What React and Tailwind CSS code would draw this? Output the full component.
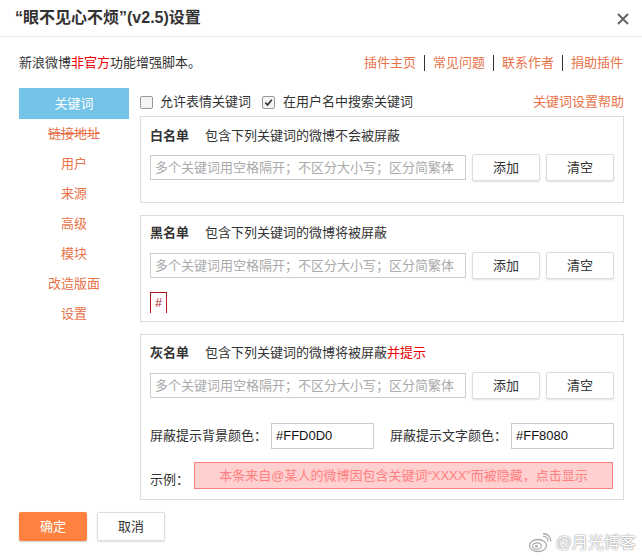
import React from "react";

const FONT = "font-['Liberation_Sans','Noto_Sans_CJK_SC',sans-serif]";

function Checkbox({ checked }) {
  return (
    <span className="w-[13px] h-[13px] border border-[#999] rounded-[2px] bg-[#f4f4f4] flex items-center justify-center">
      {checked && (
        <svg width="9" height="9" viewBox="0 0 10 10">
          <path d="M1.5 5.2 L4 7.8 L8.6 2" fill="none" stroke="#333" strokeWidth="1.8" />
        </svg>
      )}
    </span>
  );
}

function KeywordRow() {
  return (
    <div className="flex items-center h-[27px]">
      <div className="w-[316px] h-[25px] border border-[#ccc] flex items-center pl-[4px] text-[#aaa] whitespace-nowrap overflow-hidden">
        多个关键词用空格隔开；不区分大小写；区分简繁体
      </div>
      <button className="ml-[6px] w-[68px] h-[27px] border border-[#ddd] rounded-[2px] bg-white shadow-[0_1px_2px_rgba(0,0,0,0.12)] text-[#333]">
        添加
      </button>
      <button className="ml-[6px] w-[68px] h-[27px] border border-[#ddd] rounded-[2px] bg-white shadow-[0_1px_2px_rgba(0,0,0,0.12)] text-[#333]">
        清空
      </button>
    </div>
  );
}

function Title({ name, desc, extra }) {
  return (
    <div className="flex items-center h-[20px] leading-[20px]">
      <span className="font-bold text-[#333]">{name}</span>
      <span className="ml-[16px] text-[#333]">{desc}</span>
      {extra && <span className="text-[#e00]">{extra}</span>}
    </div>
  );
}

export default function App() {
  const menu = ["关键词", "链接地址", "用户", "来源", "高级", "模块", "改造版面", "设置"];
  const links = ["插件主页", "常见问题", "联系作者", "捐助插件"];

  return (
    <div className={`w-[642px] h-[560px] bg-white relative overflow-hidden text-[13px] text-[#333] ${FONT}`}>
      {/* header */}
      <div className="h-[37px] border-b border-[#eee] flex items-center justify-between pl-[15px] pr-[13px]">
        <span className="text-[16px] font-bold text-[#333] leading-[20px] mt-[-1px]">“眼不见心不烦”(v2.5)设置</span>
        <svg width="12" height="12" viewBox="0 0 12 12" className="mt-[2px]">
          <path d="M1 1 L11 11 M11 1 L1 11" stroke="#666" strokeWidth="2" />
        </svg>
      </div>

      <div className="h-[51px] flex items-center justify-between pl-[19px] pr-[19px]">
        <span>
          新浪微博<span className="text-[#e00]">非官方</span>功能增强脚本。
        </span>
        <div className="flex items-center text-[#e8734a]">
          {links.map((l, i) => (
            <React.Fragment key={l}>
              {i > 0 && <span className="mx-[8px] w-px h-[16px] bg-[#333]" />}
              <span>{l}</span>
            </React.Fragment>
          ))}
        </div>
      </div>

      <div className="flex pl-[19px]">
        {/* sidebar */}
        <div className="w-[110px] flex flex-col">
          {menu.map((m, i) => (
            <div
              key={m}
              className={`h-[30px] flex items-center justify-center ${
                i === 0 ? "bg-[#74c3e8] text-white h-[31px]" : "text-[#e8734a]"
              } ${i === 1 ? "line-through" : ""}`}
            >
              {m}
            </div>
          ))}
        </div>

        {/* content */}
        <div className="ml-[11px] w-[484px]">
          <div className="h-[28px] flex items-center">
            <Checkbox />
            <span className="ml-[7px]">允许表情关键词</span>
            <span className="ml-[11px]">
              <Checkbox checked />
            </span>
            <span className="ml-[8px]">在用户名中搜索关键词</span>
            <span className="ml-auto text-[#e8734a]">关键词设置帮助</span>
          </div>

          <div className="h-[87px] border border-[#ddd] px-[9px] pt-[9px]">
            <Title name="白名单" desc="包含下列关键词的微博不会被屏蔽" />
            <div className="mt-[8px]">
              <KeywordRow />
            </div>
          </div>

          <div className="mt-[12px] h-[107px] border border-[#ddd] px-[9px] pt-[7px]">
            <Title name="黑名单" desc="包含下列关键词的微博将被屏蔽" />
            <div className="mt-[9px]">
              <KeywordRow />
            </div>
            <div className="mt-[13px] w-[17px] h-[21px] border-t border-l border-r border-[#b01c1c] text-[#b01c1c] flex justify-center pt-[1px] text-[12px] leading-[18px]">
              #
            </div>
          </div>

          <div className="mt-[12px] h-[166px] border border-[#ddd] px-[9px] pt-[8px]">
            <Title name="灰名单" desc="包含下列关键词的微博将被屏蔽" extra="并提示" />
            <div className="mt-[9px]">
              <KeywordRow />
            </div>
            <div className="mt-[24px] flex items-center h-[26px]">
              <span className="w-[121px]">屏蔽提示背景颜色：</span>
              <div className="w-[103px] h-[26px] border border-[#ccc] flex items-center pl-[4px] text-[#111]">#FFD0D0</div>
              <span className="ml-[16px] w-[121px]">屏蔽提示文字颜色：</span>
              <div className="w-[103px] h-[26px] border border-[#ccc] flex items-center pl-[4px] text-[#111]">#FF8080</div>
            </div>
            <div className="mt-[13px] flex items-center h-[27px]">
              <span className="w-[44px] mt-[8px]">示例：</span>
              <div className="w-[419px] h-[27px] bg-[#ffd0d0] border border-[#ff8080] flex items-center justify-center text-[#ff8080] whitespace-nowrap">
                本条来自@某人的微博因包含关键词“XXXX”而被隐藏，点击显示
              </div>
            </div>
          </div>
        </div>
      </div>

      <div className="mt-[12px] pl-[19px] flex">
        <button className="w-[68px] h-[29px] bg-[#ff8140] text-white rounded-[2px] shadow-[0_1px_2px_rgba(0,0,0,0.2)]">确定</button>
        <button className="ml-[10px] w-[68px] h-[29px] bg-white border border-[#ddd] rounded-[2px] shadow-[0_1px_2px_rgba(0,0,0,0.12)] text-[#333]">取消</button>
      </div>

      {/* watermark */}
      <div className="absolute right-[6px] bottom-[5px] flex items-center text-white text-[16px] [text-shadow:0_0_2px_#999,0_0_1px_#888]">
        <svg width="24" height="20" viewBox="0 0 24 20" className="mr-[4px]">
          <ellipse cx="10" cy="12.5" rx="8.5" ry="6" fill="#fff" stroke="#aaa" strokeWidth="1.3" />
          <ellipse cx="9" cy="13" rx="4.5" ry="3.2" fill="none" stroke="#aaa" strokeWidth="1.2" />
          <circle cx="8.5" cy="13.3" r="1.3" fill="#aaa" />
          <path d="M15 3.5 A4.5 4.5 0 0 1 20 8.5" fill="none" stroke="#aaa" strokeWidth="1.3" />
          <path d="M15 0.8 A7.2 7.2 0 0 1 22.8 8.5" fill="none" stroke="#aaa" strokeWidth="1.3" />
        </svg>
        <span>@月光博客</span>
      </div>
    </div>
  );
}
